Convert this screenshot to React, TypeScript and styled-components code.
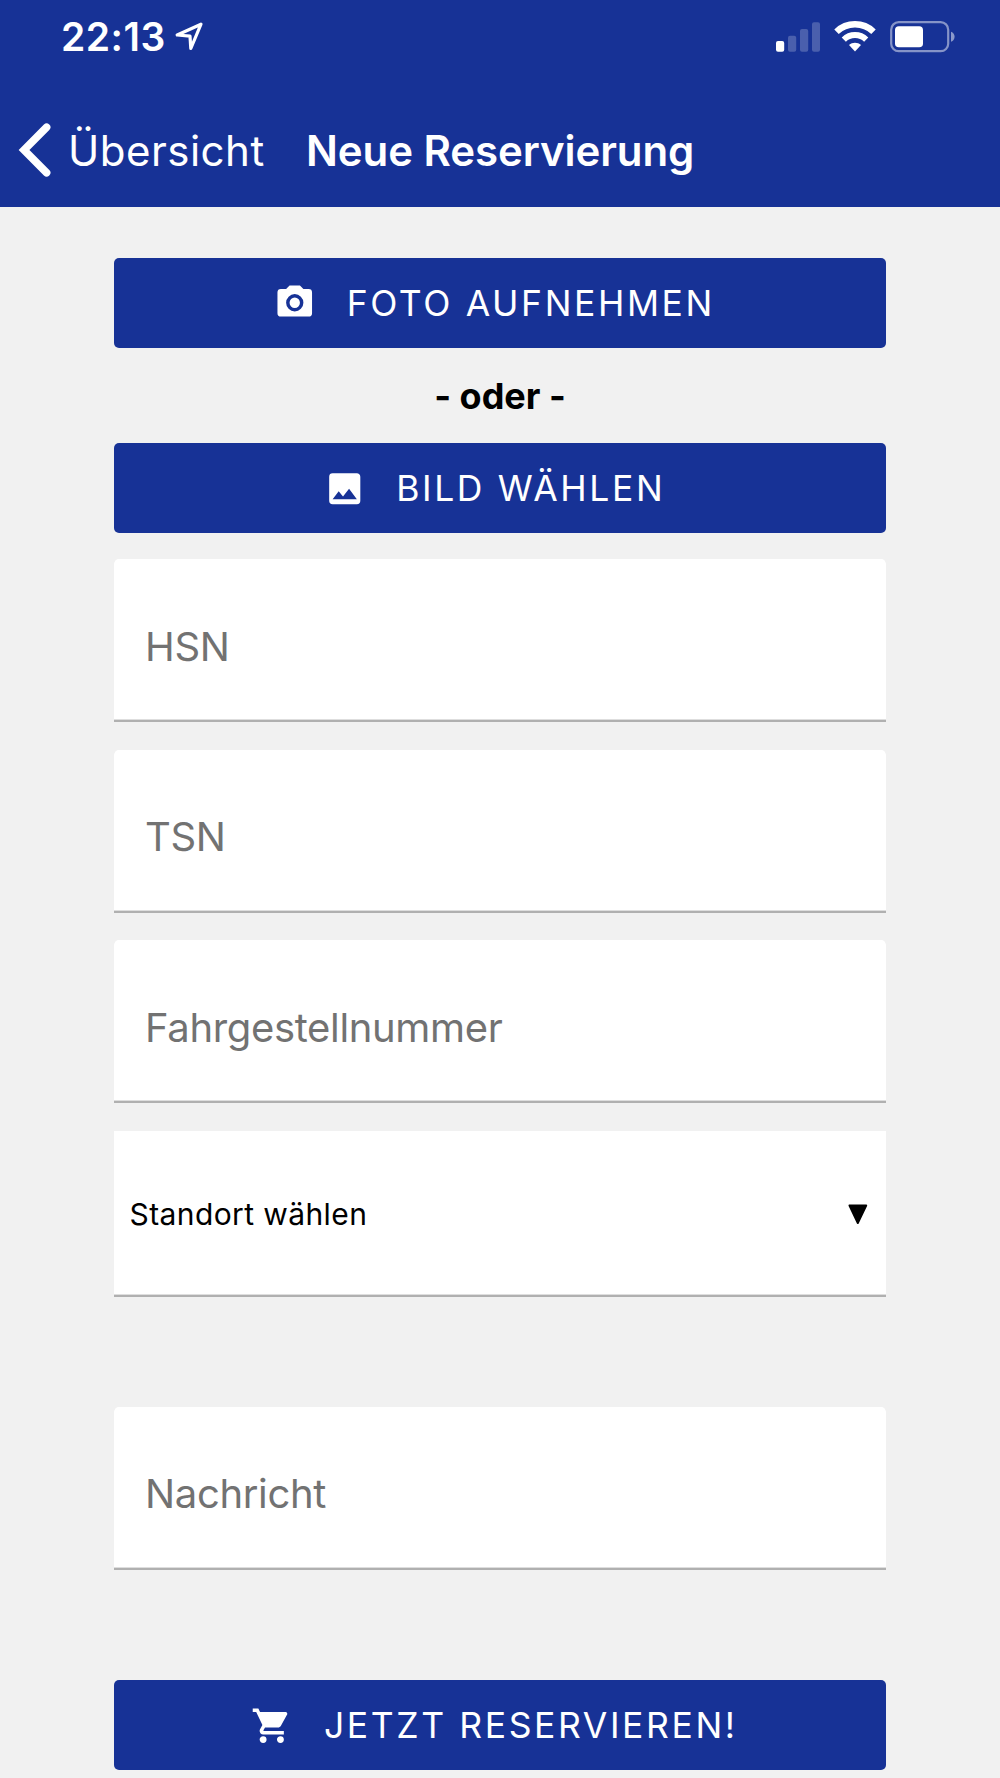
import React from "react";
import styled, { createGlobalStyle } from "styled-components";

const BLUE = "#173296";

const GlobalStyle = createGlobalStyle`
  *, *::before, *::after { box-sizing: border-box; }
  body {
    margin: 0;
    background: #f1f1f1;
    font-family: Inter, "Liberation Sans", sans-serif;
  }
`;

const Screen = styled.div`
  width: 1000px;
  height: 1778px;
  overflow: hidden;
  display: flex;
  flex-direction: column;
  background: #f1f1f1;
`;

const Header = styled.header`
  flex: none;
  height: 206.5px;
  background: ${BLUE};
  color: #fff;
`;

const StatusBar = styled.div`
  height: 73px;
  padding: 0 45px 0 61px;
  display: flex;
  align-items: center;
  justify-content: space-between;
`;

const StatusGroup = styled.div<{ $gap: number }>`
  display: flex;
  align-items: center;
  gap: ${(p) => p.$gap}px;
`;

const Time = styled.span`
  font-size: 39px;
  font-weight: 600;
  line-height: 73px;
  letter-spacing: 0.5px;
`;

const NavBar = styled.nav`
  height: 133px;
  padding: 20px 0 0 13.5px;
  display: flex;
  align-items: center;
`;

const BackButton = styled.button`
  width: 292.5px;
  padding: 0;
  border: 0;
  background: none;
  color: inherit;
  font: inherit;
  display: flex;
  align-items: center;
  gap: 16.5px;
`;

const BackLabel = styled.span`
  padding-top: 3px;
  font-size: 42px;
  font-weight: 380;
  line-height: 60px;
  letter-spacing: 0.5px;
`;

const Title = styled.h1`
  margin: 0;
  padding-top: 2px;
  font-size: 42px;
  font-weight: 600;
  line-height: 60px;
  letter-spacing: -0.08px;
  white-space: nowrap;
`;

const Form = styled.main`
  padding: 51.5px 114px 0;
  display: flex;
  flex-direction: column;
`;

const ActionButton = styled.button<{ $top?: number }>`
  height: 90px;
  margin: ${(p) => p.$top ?? 0}px 0 0;
  padding: 0 11px 0 0;
  border: 0;
  border-radius: 5px;
  background: ${BLUE};
  color: #fff;
  font: 430 35.5px/90px Inter, "Liberation Sans", sans-serif;
  letter-spacing: 2.6px;
  white-space: nowrap;
  display: flex;
  align-items: center;
  justify-content: center;
  gap: 31px;
`;

const ButtonText = styled.span`
  padding-top: 2px;
`;

const Divider = styled.p`
  height: 95.3px;
  margin: 0;
  font-size: 36px;
  font-weight: 700;
  line-height: 96px;
  text-align: center;
  color: #000;
`;

const Field = styled.label<{ $top: number }>`
  height: 163px;
  margin-top: ${(p) => p.$top}px;
  padding: 14px 31px 0;
  border-bottom: 2px solid #b0b0b0;
  border-radius: 5px 5px 0 0;
  background: #fff;
  box-shadow: inset 0 -1px #dedede;
  color: #727272;
  font-size: 40px;
  line-height: 48px;
  letter-spacing: -0.34px;
  display: flex;
  align-items: center;
`;

const Select = styled.div`
  height: 166.5px;
  margin-top: 27.5px;
  padding: 2px 18px 0 15.5px;
  border-bottom: 2px solid #b0b0b0;
  background: #fff;
  box-shadow: inset 0 -1px #dedede;
  color: #000;
  font-size: 30px;
  letter-spacing: 0.4px;
  display: flex;
  align-items: center;
  justify-content: space-between;
`;

const icons = {
  camera:
    "M4,4H7L9,2H15L17,4H20A2,2 0 0,1 22,6V18A2,2 0 0,1 20,20H4A2,2 0 0,1 2,18V6A2,2 0 0,1 4,4M12,7A5,5 0 0,0 7,12A5,5 0 0,0 12,17A5,5 0 0,0 17,12A5,5 0 0,0 12,7M12,9A3,3 0 0,1 15,12A3,3 0 0,1 12,15A3,3 0 0,1 9,12A3,3 0 0,1 12,9Z",
  image:
    "M8.5,13.5L11,16.5L14.5,12L19,18H5M21,19V5C21,3.89 20.1,3 19,3H5A2,2 0 0,0 3,5V19A2,2 0 0,0 5,21H19A2,2 0 0,0 21,19Z",
  cart:
    "M17,18A2,2 0 0,1 19,20A2,2 0 0,1 17,22C15.89,22 15,21.1 15,20C15,18.89 15.89,18 17,18M1,2H4.27L5.21,4H20A1,1 0 0,1 21,5C21,5.17 20.95,5.34 20.88,5.5L17.3,11.97C16.96,12.58 16.3,13 15.55,13H8.1L7.2,14.63L7.17,14.75A0.25,0.25 0 0,0 7.42,15H19V17H7C5.89,17 5,16.1 5,15C5,14.65 5.09,14.32 5.24,14.04L6.6,11.59L3,4H1V2M7,18A2,2 0 0,1 9,20A2,2 0 0,1 7,22C5.89,22 5,21.1 5,20C5,18.89 5.89,18 7,18Z",
};

const ButtonIcon = ({ name }: { name: keyof typeof icons }) => (
  <svg width="41.5" height="41.5" viewBox="0 0 24 24" fill="currentColor" fillRule="evenodd">
    <path d={icons[name]} />
  </svg>
);

const LocationArrow = () => (
  <svg width="30" height="30" viewBox="0 0 30 30" fill="none" stroke="#fff" strokeWidth="3.2" strokeLinejoin="round">
    <path d="M27 2.2 3.2 13 16 14.2 16.8 26.5Z" />
  </svg>
);

const Signal = () => (
  <svg width="44" height="32" viewBox="0 0 44 32" fill="#fff">
    <rect x="0" y="20" width="8.2" height="10.8" rx="2" />
    <g opacity="0.22">
      <rect x="12" y="14.8" width="8.2" height="16" rx="2" />
      <rect x="24" y="8" width="8.2" height="22.8" rx="2" />
      <rect x="36" y="1.2" width="8" height="29.6" rx="2" />
    </g>
  </svg>
);

const Wifi = () => (
  <svg width="42" height="32" viewBox="0 0 42 32" fill="none">
    <path d="M2.5 10.7C12.8 0.8 29.2 0.8 39.5 10.7" stroke="#fff" strokeWidth="6.4" />
    <path d="M9.8 18.6C16 12.6 26 12.6 32.2 18.6" stroke="#fff" strokeWidth="6" />
    <path d="M15 24C18.4 21 23.6 21 27 24L21 30.4Z" fill="#fff" />
  </svg>
);

const Battery = () => (
  <svg width="65" height="32" viewBox="0 0 65 32">
    <rect x="1.2" y="1.2" width="57" height="29" rx="7.5" fill="none" stroke="#fff" strokeOpacity="0.48" strokeWidth="2.2" />
    <rect x="5" y="5.3" width="28" height="21" rx="3.8" fill="#fff" />
    <path d="M61 10.7C65.8 12.2 65.8 19.2 61 20.7Z" fill="#fff" fillOpacity="0.5" />
  </svg>
);

const BackChevron = () => (
  <svg width="38" height="56" viewBox="0 0 38 56" fill="none" stroke="#fff" strokeWidth="7.6" strokeLinecap="round">
    <path d="M32.6 5.2 10 28 32.6 50.8" />
  </svg>
);

const Caret = () => (
  <svg width="20" height="22" viewBox="0 0 20 22" stroke="#000" strokeWidth="2" strokeLinejoin="round">
    <path d="M1.5 2.5H18.2L9.8 20Z" />
  </svg>
);

export default function App() {
  return (
    <Screen>
      <GlobalStyle />
      <Header>
        <StatusBar>
          <StatusGroup $gap={8.5}>
            <Time>22:13</Time>
            <LocationArrow />
          </StatusGroup>
          <StatusGroup $gap={14}>
            <Signal />
            <Wifi />
            <Battery />
          </StatusGroup>
        </StatusBar>
        <NavBar>
          <BackButton>
            <BackChevron />
            <BackLabel>Übersicht</BackLabel>
          </BackButton>
          <Title>Neue Reservierung</Title>
        </NavBar>
      </Header>
      <Form>
        <ActionButton>
          <ButtonIcon name="camera" />
          <ButtonText>FOTO AUFNEHMEN</ButtonText>
        </ActionButton>
        <Divider>- oder -</Divider>
        <ActionButton>
          <ButtonIcon name="image" />
          <ButtonText>BILD WÄHLEN</ButtonText>
        </ActionButton>
        <Field $top={26.1}>HSN</Field>
        <Field $top={27.5}>TSN</Field>
        <Field $top={27.5}>Fahrgestellnummer</Field>
        <Select>
          <span>Standort wählen</span>
          <Caret />
        </Select>
        <Field $top={109.6}>Nachricht</Field>
        <ActionButton $top={110.5}>
          <ButtonIcon name="cart" />
          <ButtonText>JETZT RESERVIEREN!</ButtonText>
        </ActionButton>
      </Form>
    </Screen>
  );
}
